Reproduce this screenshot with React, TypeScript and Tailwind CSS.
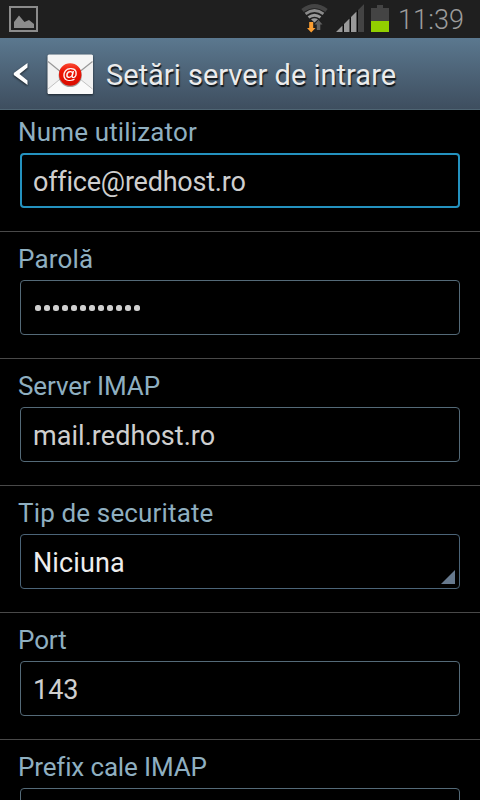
import type { ReactNode } from "react";

function StatusBar() {
  return (
    <div className="flex h-[38px] shrink-0 bg-[#1f1f1f]">
      <svg className="ml-[9px] mt-[6px]" width="29" height="26" viewBox="0 0 29 26">
        <rect x="1" y="1" width="27" height="24" fill="none" stroke="#8c8c8c" strokeWidth="2" />
        <path d="M5 22V16L10 9.500L15.500 16L20 14L25 18V22Z" fill="#8c8c8c" />
      </svg>
      <svg className="ml-auto" width="98" height="38" viewBox="0 0 98 38">
        <g fill="none" strokeWidth="2.800">
          <path d="M11.500 10.500Q23.500 1.800 35.500 10.500" stroke="#444" strokeWidth="4" />
          <path d="M14.500 13.800Q23.500 7.200 32.500 13.800" stroke="#8a8a8a" />
          <path d="M17.500 17.400Q23.500 13 29.500 17.400" stroke="#999" />
        </g>
        <path d="M20 19.300Q23.500 17 27 19.300L23.500 22.500Z" fill="#999" />
        <path d="M18.200 22H22.200V28H24.500L20.200 32.500L16 28H18.200Z" fill="#fa9d31" />
        <path d="M25.800 30V24.500H23.500L27.500 20L31.500 24.500H29.300V30Z" fill="#606060" />
        <path d="M45 32L73 4V32Z" fill="#0a0a0a" />
        <path d="M45 32L51.500 25.500V32Z" fill="#999" />
        <path d="M53 32V24L58.500 18.500V32Z" fill="#999" />
        <path d="M60 32V17L65.500 11.500V32Z" fill="#999" />
        <path d="M67 32V10L73 4V32Z" fill="#444" />
        <path d="M80 8H86V5H92V8H98V21H80Z" fill="#444" />
        <rect x="80" y="21" width="18" height="11" fill="#92cf00" />
      </svg>
      <span className="ml-[9px] mr-[15px] mt-px w-[67px] whitespace-nowrap text-[27px] font-light leading-[38px] tracking-[0.1px] text-[#9c9c9c]">
        11:39
      </span>
    </div>
  );
}

function MailIcon() {
  return (
    <svg className="ml-[17px] drop-shadow-[0_1px_1px_rgba(0,0,0,0.6)]" width="50" height="42" viewBox="45 53 50 42">
      <defs>
        <linearGradient id="seal" x1="0" y1="0" x2="0" y2="1">
          <stop offset="0" stopColor="#fa4a32" />
          <stop offset="0.35" stopColor="#ee1505" />
          <stop offset="1" stopColor="#d90c00" />
        </linearGradient>
      </defs>
      <rect x="47.500" y="54.500" width="45.500" height="39.500" rx="1.500" fill="#f1f1f1" />
      <path d="M48 89L65 75H75L92.500 89V94H48Z" fill="#fafafa" />
      <path d="M48 89L65 75M92.500 89L75 75" stroke="#c2c2c2" strokeWidth="1" />
      <path d="M48 55H92.500V61.500L73 77Q70 79 67 77L48 61.500Z" fill="#f5f5f5" />
      <path d="M48 61.500L67 77M92.500 61.500L73 77" stroke="#999" strokeWidth="1.200" />
      <circle cx="70.200" cy="75.500" r="11.600" fill="#555" opacity="0.55" />
      <circle cx="70.200" cy="74.500" r="11.200" fill="url(#seal)" />
      <text x="70.200" y="78.500" textAnchor="middle" fontSize="15.500" fill="#fff" stroke="#fff" strokeWidth="0.200" fontFamily="Liberation Sans, sans-serif">
        @
      </text>
    </svg>
  );
}

function ActionBar() {
  return (
    <header className="relative z-10 flex h-[72px] shrink-0 items-center border-b border-[#4f6573] bg-linear-to-b from-[#5b788f] to-[#3e4e5f]">
      <svg className="ml-[12px] drop-shadow-[0_1px_1px_rgba(0,0,0,0.7)]" width="16" height="24" viewBox="0 0 16 24">
        <path d="M15.500 1V5.500L7.500 12L15.500 18.500V23L1.800 13V11Z" fill="#fff" />
      </svg>
      <MailIcon />
      <h1 className="ml-[11px] mt-[5px] whitespace-nowrap text-[29px] font-normal text-[#ebebeb] [text-shadow:1px_2px_1px_rgba(0,0,0,0.75)]">
        Setări server de intrare
      </h1>
    </header>
  );
}

type FieldProps = { label: string; labelClass?: string; boxClass?: string; children?: ReactNode };

function Field({ label, labelClass = "tracking-[0.15px]", boxClass = "border border-[#546a78]", children }: FieldProps) {
  return (
    <section className="flex h-[127px] shrink-0 flex-col border-b border-[#494949] px-[20px]">
      <label className={`-ml-[2px] mt-[11px] h-[37px] whitespace-nowrap text-[26px] leading-[32px] text-[#8fafc0] ${labelClass}`}>
        {label}
      </label>
      <div className={`relative flex h-[55px] items-center rounded-[4px] ${boxClass}`}>{children}</div>
    </section>
  );
}

export default function App() {
  return (
    <main className="flex h-[800px] w-[480px] flex-col overflow-hidden bg-black font-['Roboto',sans-serif]">
      <StatusBar />
      <ActionBar />
      <div className="-mt-[5px] flex min-h-0 flex-1 flex-col overflow-hidden text-[27px] text-[#cfcfcf]">
        <Field label="Nume utilizator" boxClass="border-2 border-[#2492bf]">
          <span className="ml-[11px] mt-[4px] tracking-[-0.22px]">office@redhost.ro</span>
        </Field>
        <Field label="Parolă" labelClass="tracking-[0.2px]">
          <div className="ml-[14px] mt-[1px] flex gap-[3px]">
            {Array.from({ length: 12 }, (_, i) => (
              <i key={i} className="h-[6px] w-[6px] rounded-[2.5px] bg-[#cfcfcf]" />
            ))}
          </div>
        </Field>
        <Field label="Server IMAP" labelClass="tracking-[-0.1px]">
          <span className="ml-[12px] mt-[4px] tracking-[0.05px]">mail.redhost.ro</span>
        </Field>
        <Field label="Tip de securitate" boxClass="border border-[#4b6478]">
          <span className="ml-[12px] mt-[4px] tracking-[0.1px] text-[#ededed]">Niciuna</span>
          <svg className="absolute bottom-[4px] right-[4px]" width="14" height="14" viewBox="0 0 14 14">
            <path d="M14 0V14H0Z" fill="#66798e" />
          </svg>
        </Field>
        <Field label="Port" labelClass="tracking-[-0.1px]">
          <span className="ml-[12px] mt-[4px]">143</span>
        </Field>
        <Field label="Prefix cale IMAP" labelClass="tracking-[-0.15px]" />
      </div>
    </main>
  );
}
